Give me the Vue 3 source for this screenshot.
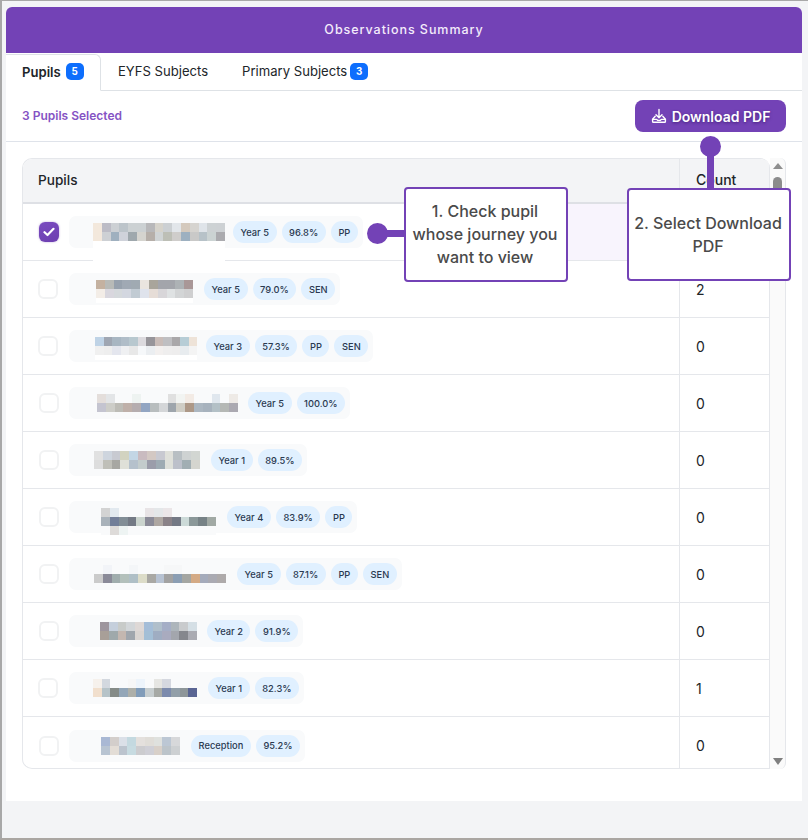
<script setup>
const F = 'f9fafb'
const rows = [
  { checked: true, left: 24, width: 132, tail: 21, extra: 0, count: '', tags: ['Year 5', '96.8%', 'PP'], mosaic: [
    'f3e8dc bcbcc6 ccd0d4 bcc4ca ccd1d3 ccd1d3 b8b8ba d6d3cb ccd0d3 e2e6ea d4c9bd d6d4d0 dfe4e9 cdd2d4 cdd1d4',
    'f3e8dc cdd0d4 9fb0bf cfd2da 9fa8ad d5d4cf b6afa9 d0d4d5 bdbfb6 cfcdcb 9db0c0 c9c9c8 b7c2c8 cbd3d3 ababaf'] },
  { left: 27, width: 97, tail: 5, extra: 3, count: '2', tags: ['Year 5', '79.0%', 'SEN'], mosaic: [
    'c4b1a0 b8bab7 97a1ad a0a9b4 a0aab2 eae5df a9a59b a3a5ab a3a5ab adb2b5 a99797',
    'f3ede7 d9d7de d5d9dc d3d7e0 c1cbd3 dfe3ec e6ddd7 d8d6d9 dfe2e3 d3d5d6 cfcfd0'] },
  { left: 26, width: 102, tail: 5, extra: 1, count: '0', tags: ['Year 3', '57.3%', 'PP', 'SEN'], mosaic: [
    'bfd3e6 9fa6b2 a8b6c2 b0bdc8 b8c8cf dcdade 97959a c9bcb8 bfbfc2 aaa8aa b7cdd6 eee3d8',
    'f0f0f0 eeeeee e4e6ee eff0f2 e8e8e8 f6f8fa ebeef1 f3f0ef efeeee eeeded e8ecef f4f4f4'] },
  { left: 28, width: 141, tail: 0, extra: 2, count: '0', tags: ['Year 5', '100.0%'], mosaic: [
    `e4dedb e3e5e7 ${F} ${F} eef3f1 ${F} ${F} ${F} e0e0e0 f2f4f2 f3ebe5 ${F} ${F} e0e7ee ${F} eeeae6`,
    'c4c4d0 cdcdc8 bdbcb6 bfb0a9 b5adaf 92a5c2 b8bdbe d4d6d8 9ea5ac cfcdc5 ad9887 acb7c1 a7b2bd b3c0c6 b5b8b5 aba9b1'] },
  { left: 25, width: 106, tail: 0, extra: 3, count: '0', tags: ['Year 1', '89.5%'], mosaic: [
    'e1e1e1 ced5de c8cad1 d2d3c0 c3d6e5 c9bbc0 d3c8c3 c8c9d1 dfe0da b8bfc3 ced2d2 d2d6d2',
    'dddddd bfbfb8 a7a7a2 dfe0d8 b5c1cc c3cccc 9b9daa 9eabb3 dee0da bcc0ca a1aeb3 d5d5cf'] },
  { left: 32, width: 115, tail: 0, extra: 3, count: '0', tags: ['Year 4', '83.9%', 'PP'], mosaic: [
    `d3d3d3 e2e9ef ${F} ${F} ${F} e8e4e6 e4e7e9 ebe6e8 ${F} ${F} ${F} ${F} ${F}`,
    'a9b2ba 727e98 828e96 747a85 cbd4ce 8b8b98 aea7a2 8a8288 747985 ccdad8 8b9899 778286 a1a9a4',
    `${F} dedbd9 eef4f3 ${F} ${F} ${F} ${F} ${F} ${F} ${F} ${F} ${F} ${F}`] },
  { left: 25, width: 132, tail: 0, extra: 3, count: '0', tags: ['Year 5', '87.1%', 'PP', 'SEN'], mosaic: [
    `${F} f2f4f8 ${F} ${F} f4f6f8 ${F} ${F} ${F} f6f7f8 f6f7f8 ${F} ${F} ${F} ${F} ${F}`,
    'cbcbcb 8a8a98 a0adad b3c0bb afbfc6 dcdcc8 a9a8a4 b7c2d2 a2a2a2 8b9eb3 a4a6a2 d4aa85 a5abbb aaaab2 aeaaaa'] },
  { left: 31, width: 97, tail: 0, extra: 2, count: '0', tags: ['Year 2', '91.9%'], mosaic: [
    '9d959d c5cfdc c8cbc9 d2d6d9 ded8d6 a4bdd8 b0bfcb a5aec6 adb5bb c9cbcd d5dfe5',
    'a89f98 9fa9ab c3b7b0 9fa6ad d9d5d2 a3bfd6 9fadc2 a9abbf a3a6ad 85878d aaabb2'] },
  { left: 24, width: 104, tail: 0, extra: 3, count: '1', tags: ['Year 1', '82.3%'], mosaic: [
    `f6f1ec d3d8df ${F} ${F} f7f7f7 edf4fb ${F} e6e6e3 d5d8e0 ${F} ${F} ${F}`,
    'f1dfcd b6c3c8 858b87 93a6b8 adafa9 819cb9 c6cdcf a6a9a5 7c8bad 929fa9 8e9699 5a6593'] },
  { left: 32, width: 79, tail: 0, extra: 3, count: '0', tags: ['Reception', '95.2%'], mosaic: [
    'a9b8d4 d3cecb dbe0e8 c4d9e0 e4e0dd e0ddd8 dfe1de bcc7d4 d7d8da',
    'b8c4d2 e3ddd6 bcc4ce c7dbe1 cccccf cfcfd6 d8d0c9 bcc4ca cdd0d2'] },
].map(r => ({ ...r, cells: r.mosaic.map(line => line.split(' ').map(c => '#' + c)) }))

const mosaicStyle = r => ({
  width: r.width + 'px',
  marginLeft: r.left + 'px',
  marginRight: r.extra + 'px',
  gridTemplateColumns: `repeat(${r.cells[0].length}, 1fr)`,
  marginBottom: r.cells.length === 3 ? '-9px' : '0',
})
</script>

<template>
  <div class="page">
    <section class="card">
      <header class="title">Observations Summary</header>

      <nav class="tabs">
        <div class="tab active">Pupils <span class="badge">5</span></div>
        <div class="tab">EYFS Subjects</div>
        <div class="tab">Primary Subjects <span class="badge">3</span></div>
      </nav>

      <div class="toolbar">
        <span class="selected">3 Pupils Selected</span>
        <button class="download" type="button">
          <svg width="16" height="16" viewBox="0 0 16 16" fill="none" stroke="currentColor" stroke-width="1.4" stroke-linecap="round" stroke-linejoin="round">
            <path d="M8 1.5v8M5 6.8 8 9.8l3-3" />
            <path d="M4.2 8.2 1.6 11.2v2.2c0 .5.3.8.8.8h11.2c.5 0 .8-.3.8-.8v-2.2l-2.6-3" />
            <path d="M1.6 11.4h4.2l.8 1h2.8l.8-1h4.2" />
          </svg>
          Download PDF
        </button>
      </div>

      <div class="table-area">
        <div class="table">
          <div class="thead">
            <div class="col-main">Pupils</div>
            <div class="col-count">Count</div>
          </div>
          <div class="tbody">
            <div v-for="(r, i) in rows" :key="i" class="row" :class="{ on: r.checked }">
              <div class="col-main">
                <span class="check" :class="{ checked: r.checked, nudge: i === 8 || i === 1 || i === 2 }">
                  <svg v-if="r.checked" width="12" height="10" viewBox="0 0 12 10" fill="none" stroke="#fff" stroke-width="2.2" stroke-linecap="round" stroke-linejoin="round">
                    <path d="M1.5 5.2 4.5 8 10.5 1.8" />
                  </svg>
                </span>
                <div class="name">
                  <div class="mosaic" :style="mosaicStyle(r)">
                    <template v-for="(line, li) in r.cells" :key="li">
                      <i v-for="(c, ci) in line" :key="ci" :style="{ background: c }"></i>
                    </template>
                    <b v-if="r.tail" class="tail" :style="{ height: r.tail + 'px' }"></b>
                  </div>
                  <div class="tags">
                    <span v-for="t in r.tags" :key="t" class="tag">{{ t }}</span>
                  </div>
                </div>
              </div>
              <div class="col-count">{{ r.count }}</div>
            </div>
          </div>
        </div>
        <div class="scrollbar">
          <span class="arrow up"></span>
          <span class="thumb"></span>
          <span class="arrow down"></span>
        </div>
      </div>
    </section>

    <div class="callout one">1. Check pupil whose journey you want to view</div>
    <div class="callout two">2. Select Download PDF</div>
    <span class="dot dot-one"></span>
    <span class="line line-one"></span>
    <span class="dot dot-two"></span>
    <span class="line line-two"></span>
  </div>
</template>

<style>
html, body { margin: 0; background: #f3f4f6; }
</style>

<style scoped>
.page {
  position: relative;
  box-sizing: border-box;
  width: 808px;
  height: 840px;
  padding: 6px 6px 0 4px;
  background: #f3f4f6;
  border-top: 1px solid #a8a8a8;
  border-left: 2px solid #a8a8a8;
  border-bottom: 2px solid #aaa6a2;
  font-family: Inter, "Liberation Sans", sans-serif;
  color: #212529;
  overflow: hidden;
}
.card {
  background: #fff;
  height: 794px;
  border-radius: 6px 6px 0 0;
}
.title {
  height: 46px;
  box-sizing: border-box;
  padding-bottom: 2px;
  background: #7342b6;
  border-radius: 6px 6px 0 0;
  color: #f3ecfb;
  font-size: 12.5px;
  font-weight: 500;
  letter-spacing: 0.95px;
  display: flex;
  align-items: center;
  justify-content: center;
}
.tabs {
  display: flex;
  align-items: flex-start;
  height: 38px;
  box-sizing: border-box;
  border-bottom: 1px solid #dee2e6;
  padding-top: 1px;
}
.tab {
  height: 34px;
  padding: 0 17px 2px;
  display: flex;
  align-items: center;
  gap: 3px;
  font-size: 13.1px;
  color: #212529;
  white-space: nowrap;
}
.tab.active {
  box-sizing: content-box;
  width: 62px;
  height: 33px;
  gap: 5px;
  padding: 0 16px 2px;
  font-weight: 600;
  background: #fff;
  border: 1px solid #dee2e6;
  border-left: 0;
  border-bottom-color: #fff;
  border-radius: 0 6px 0 0;
}
.badge {
  display: inline-flex;
  align-items: center;
  justify-content: center;
  min-width: 18px;
  height: 17px;
  padding: 0 1px;
  box-sizing: border-box;
  background: #0d6efd;
  border-radius: 5px;
  color: #fff;
  font-size: 9.8px;
  font-weight: 700;
}
.toolbar {
  height: 51px;
  box-sizing: border-box;
  border-bottom: 1px solid #dfe3ea;
  display: flex;
  align-items: center;
  justify-content: space-between;
  padding: 0 16px;
}
.selected {
  font-size: 12px;
  font-weight: 600;
  color: #8553c4;
  margin-top: -2px;
}
.download {
  width: 151px;
  height: 32px;
  border: 0;
  border-radius: 8px;
  background: #7342b6;
  color: #fff;
  font-family: inherit;
  font-size: 14px;
  font-weight: 600;
  display: flex;
  align-items: center;
  justify-content: center;
  gap: 5px;
  padding: 0;
  text-shadow: 0 1px 3px rgba(40, 10, 90, 0.6);
}
.table-area {
  display: flex;
  margin: 16px 16px 0;
  height: 611px;
  width: 764px;
}
.table {
  width: 748px;
  height: 100%;
  box-sizing: border-box;
  border: 1px solid #e5e7eb;
  border-right: 0;
  border-radius: 10px 10px 0 10px;
  overflow: hidden;
  display: flex;
  flex-direction: column;
}
.thead {
  display: flex;
  flex: none;
  height: 45px;
  background: #f3f4f6;
  border-bottom: 2px solid #dee0e5;
  box-sizing: border-box;
  font-size: 13.6px;
  font-weight: 500;
  padding-bottom: 2px;
}
.thead .col-main {
  padding-left: 15px;
  padding-right: 0;
}
.col-main {
  flex: none;
  width: 656px;
  display: flex;
  align-items: center;
  box-sizing: border-box;
}
.col-count {
  flex: 1;
  display: flex;
  align-items: center;
  border-left: 1px solid #e5e7eb;
  padding-left: 16px;
  font-size: 14px;
  border-right: 1px solid #e5e7eb;
}
.row {
  display: flex;
  flex: none;
  height: 57px;
  box-sizing: border-box;
  border-bottom: 1px solid #e5e7eb;
}
.row .col-main {
  padding-left: 15px;
}
.row:last-child {
  border-bottom: 0;
}
.row.on {
  background: linear-gradient(90deg, #fff 62%, #f8f4fd 63%);
}
.tbody {
  overflow: hidden;
  flex: 1;
}
.check {
  flex: none;
  width: 20px;
  height: 20px;
  margin: 0 10px 0 1px;
  box-sizing: border-box;
  border: 2px solid #f1f2f3;
  border-radius: 6px;
  background: #fff;
  display: flex;
  align-items: center;
  justify-content: center;
}
.check.nudge {
  margin: 0 11px 0 0;
}
.check.checked {
  border: 0;
  background: linear-gradient(160deg, #7a4bc0, #6d3fb0);
  box-shadow: 0 0 2px rgba(115, 66, 182, 0.5);
}
.name {
  height: 32px;
  display: flex;
  align-items: center;
  background: #f9fafb;
  border-radius: 7px;
  padding-right: 5px;
}
.mosaic {
  position: relative;
  display: grid;
  grid-auto-rows: 9px;
}
.tail {
  position: absolute;
  left: 0;
  right: 0;
  top: 18px;
  background: #fff;
}
.tags {
  display: flex;
  gap: 5px;
  margin-left: 8px;
}
.tag {
  height: 22px;
  padding: 0 7.6px;
  border-radius: 11px;
  background: #e0f0ff;
  color: #2a3950;
  font-size: 9.3px;
  font-weight: 500;
  display: flex;
  align-items: center;
  white-space: nowrap;
}
.scrollbar {
  position: relative;
  flex: none;
  width: 16px;
  height: 100%;
  box-sizing: border-box;
  background: #fafafa;
  border-right: 1px solid #e5e7eb;
  border-top-right-radius: 6px;
  border-bottom-right-radius: 6px;
}
.arrow {
  position: absolute;
  left: 3px;
  width: 0;
  height: 0;
  border-left: 5px solid transparent;
  border-right: 5px solid transparent;
}
.arrow.up {
  top: 5px;
  border-bottom: 6px solid #8f8f8f;
}
.arrow.down {
  bottom: 4px;
  border-top: 7px solid #7f7f7f;
}
.thumb {
  position: absolute;
  left: 3px;
  top: 19px;
  width: 9px;
  height: 80px;
  background: #8c8c8c;
  border-radius: 5px;
}
.callout {
  position: absolute;
  box-sizing: border-box;
  background: #fff;
  border: 2px solid #7342b6;
  border-radius: 4px;
  color: #4a4a4a;
  font-size: 16px;
  font-weight: 500;
  line-height: 23px;
  text-align: center;
  display: flex;
  align-items: center;
  justify-content: center;
}
.one {
  left: 402px;
  top: 186px;
  width: 164px;
  height: 95px;
  padding: 0 5px 0 3px;
}
.two {
  left: 625px;
  top: 187px;
  width: 164px;
  height: 93px;
  padding: 0 5px 0 3px;
}
.dot {
  position: absolute;
  width: 21px;
  height: 21px;
  border-radius: 50%;
  background: #7342b6;
}
.dot-one {
  left: 365px;
  top: 222px;
}
.dot-two {
  left: 698px;
  top: 135px;
}
.line {
  position: absolute;
  background: #7342b6;
}
.line-one {
  left: 376px;
  top: 229px;
  width: 28px;
  height: 7px;
}
.line-two {
  left: 705px;
  top: 145px;
  width: 7px;
  height: 44px;
}
</style>
